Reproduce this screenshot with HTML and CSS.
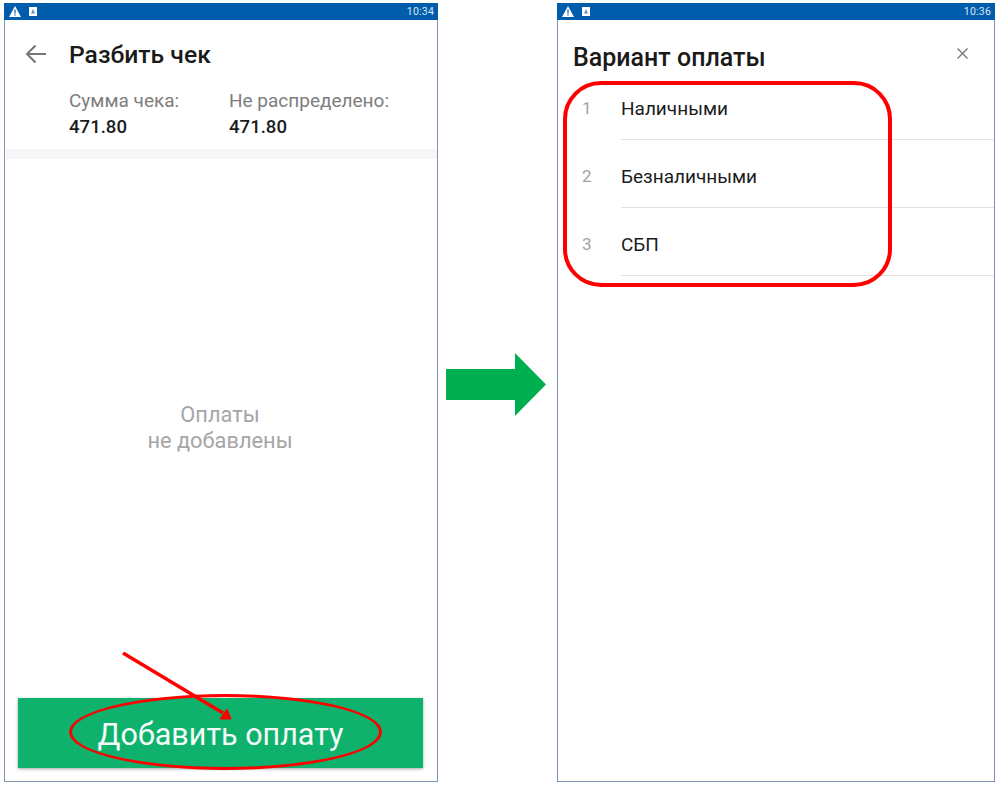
FILE: index.html
```html
<!DOCTYPE html>
<html lang="en">
<head>
    <meta charset="UTF-8">
    <title>Разбить чек</title>
    <link rel="stylesheet" href="styles.css">
</head>
<body>
    <div class="page">
        <section class="phone phone-left">
            <div class="status-bar">
                <svg class="ico-warn" width="12" height="11" viewBox="0 0 12 11"><path d="M6 0L12 11H0Z" fill="#fff"/><path d="M5.4 3.5h1.2v4H5.4zM5.4 8.3h1.2v1.2H5.4z" fill="#005dac"/></svg>
                <svg class="ico-sim" width="8" height="9" viewBox="0 0 8 9"><path d="M0 0H8V9H0Z" fill="#fff"/><path d="M4 2L6 6.5H2Z" fill="#5c8fc4"/></svg>
                <span class="clock">10:34</span>
            </div>
            <header class="top">
                <svg class="back" width="22" height="20" viewBox="0 0 22 20"><path d="M21 10H2M10.500 1.500L2 10l8.500 8.500" fill="none" stroke="#757575" stroke-width="2"/></svg>
                <h1>Разбить чек</h1>
            </header>
            <div class="totals">
                <div class="total">
                    <p class="total-label">Сумма чека:</p>
                    <p class="total-value">471.80</p>
                </div>
                <div class="total">
                    <p class="total-label">Не распределено:</p>
                    <p class="total-value">471.80</p>
                </div>
            </div>
            <div class="band"></div>
            <div class="empty">Оплаты<br>не добавлены</div>
            <button class="add-btn">Добавить оплату</button>
            <div class="mark-ellipse"></div>
            <svg class="mark-arrow" width="120" height="80" viewBox="0 0 120 80"><path d="M1 1L101 61" stroke="#f00" stroke-width="3.500" fill="none"/><path d="M109 67L98 67L105 57Z" fill="#f00" stroke="#f00" stroke-width="1"/></svg>
        </section>

        <div class="next">
            <svg width="101" height="63" viewBox="0 0 101 63"><path d="M0 16H69V0L100 31.500L69 63V47H0Z" fill="#00b050"/></svg>
        </div>

        <section class="phone phone-right">
            <div class="status-bar">
                <svg class="ico-warn" width="12" height="11" viewBox="0 0 12 11"><path d="M6 0L12 11H0Z" fill="#fff"/><path d="M5.4 3.5h1.2v4H5.4zM5.4 8.3h1.2v1.2H5.4z" fill="#005dac"/></svg>
                <svg class="ico-sim" width="8" height="9" viewBox="0 0 8 9"><path d="M0 0H8V9H0Z" fill="#fff"/><path d="M4 2L6 6.5H2Z" fill="#5c8fc4"/></svg>
                <span class="clock">10:36</span>
            </div>
            <header class="dialog-top">
                <h2>Вариант оплаты</h2>
                <svg class="close" width="11" height="11" viewBox="0 0 11 11"><path d="M.5.5l10 10M10.500.5l-10 10" stroke="#757575" stroke-width="1.300" fill="none"/></svg>
            </header>
            <ul class="pay-list">
                <li class="pay-row"><span class="pay-num">1</span><span class="pay-name">Наличными</span></li>
                <li class="pay-row"><span class="pay-num">2</span><span class="pay-name">Безналичными</span></li>
                <li class="pay-row"><span class="pay-num">3</span><span class="pay-name">СБП</span></li>
            </ul>
            <div class="mark-box"></div>
        </section>
    </div>
</body>
</html>
```

FILE: styles.css
```css
* {
    box-sizing: border-box;
}
body {
    margin: 0;
    background: #fff;
    font-family: Roboto, "Liberation Sans", sans-serif;
    color: #1c1c1c;
}
.page {
    display: flex;
    align-items: flex-start;
    padding: 3px 0 0 4px;
}
.phone {
    position: relative;
    height: 779px;
    border: 1px solid #7f95b0;
    border-top: none;
    background: #fff;
    display: flex;
    flex-direction: column;
}
.phone-left {
    width: 434px;
}
.phone-right {
    width: 438px;
}
.next {
    width: 119px;
    padding: 350px 0 0 8px;
    flex: none;
}
.next svg {
    display: block;
}
.status-bar {
    height: 17px;
    margin: 0 -1px;
    background: #005dac;
    display: flex;
    align-items: center;
    padding: 0 4px 0 5px;
    flex: none;
}
.ico-sim {
    margin-left: 8px;
}
.clock {
    margin-left: auto;
    color: #d8e8f5;
    font-size: 10.500px;
    letter-spacing: 0.2px;
}

/* left phone */
.top {
    display: flex;
    align-items: center;
    height: 68px;
    padding: 0 0 0 20px;
}
.back {
    margin-right: 22px;
}
h1 {
    margin: 0;
    font-size: 24.700px;
    font-weight: 500;
    color: #1a1a1a;
}
.totals {
    display: flex;
    padding-left: 64px;
    height: 61px;
}
.total {
    width: 160px;
}
.total-label {
    margin: 0;
    font-size: 19px;
    line-height: 26px;
    color: #7d7d7d;
    white-space: nowrap;
}
.total-value {
    margin: 0;
    font-size: 18.600px;
    line-height: 26px;
    font-weight: 500;
}
.band {
    height: 10px;
    margin: 0 0 0 1px;
    background: #f6f6f6;
    flex: none;
}
.empty {
    margin-top: 243px;
    padding-right: 2px;
    text-align: center;
    font-size: 21.800px;
    line-height: 26px;
    color: #a6a6a6;
}
.add-btn {
    margin: auto 14px 13px 13px;
    height: 70px;
    padding-top: 4px;
    border: none;
    background: #0fb26d;
    color: #f4fbf8;
    font-family: inherit;
    font-size: 30.500px;
    box-shadow: 0 1px 3px rgba(0, 0, 0, 0.35);
}
.mark-ellipse {
    position: absolute;
    left: 64px;
    top: 691px;
    width: 313px;
    height: 76px;
    border: 3px solid #f00;
    border-radius: 50%;
}
.mark-arrow {
    position: absolute;
    left: 117px;
    top: 649px;
}

/* right phone */
.dialog-top {
    display: flex;
    align-items: center;
    justify-content: space-between;
    height: 52px;
    padding: 22px 26px 0 15px;
}
h2 {
    margin: 0;
    font-size: 25px;
    font-weight: 500;
    color: #1a1a1a;
}
.close {
    margin-top: -8px;
}
.pay-list {
    list-style: none;
    margin: 0;
    padding: 0;
}
.pay-row {
    display: flex;
    height: 68px;
}
.pay-num {
    width: 63px;
    padding: 26px 0 0 24px;
    font-size: 17px;
    color: #a3a3a3;
    flex: none;
}
.pay-name {
    flex: 1;
    padding-top: 25px;
    font-size: 19px;
    border-bottom: 1px solid #e2e2e2;
}
.mark-box {
    position: absolute;
    left: 5px;
    top: 78px;
    width: 329px;
    height: 206px;
    border: 4px solid #f00;
    border-radius: 38px;
}
```
